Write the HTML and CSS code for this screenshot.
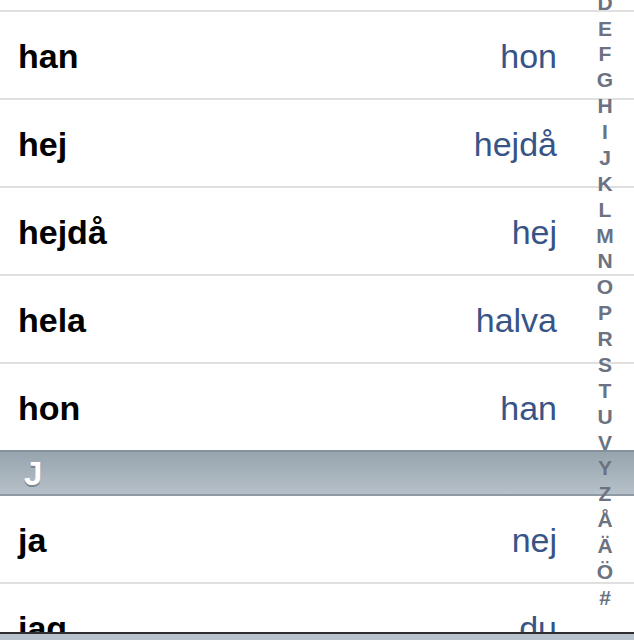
FILE: index.html
```html
<!DOCTYPE html>
<html lang="sv">
<head>
<meta charset="utf-8">
<title>Ordlista</title>
<link rel="stylesheet" href="styles.css">
</head>
<body>
<div class="table">
  <div class="row first"><span class="word">han</span><span class="opp">hon</span></div>
  <div class="row"><span class="word">hej</span><span class="opp">hejdå</span></div>
  <div class="row"><span class="word">hejdå</span><span class="opp">hej</span></div>
  <div class="row"><span class="word">hela</span><span class="opp">halva</span></div>
  <div class="row"><span class="word">hon</span><span class="opp">han</span></div>
  <div class="section-header">J</div>
  <div class="row no-top"><span class="word">ja</span><span class="opp">nej</span></div>
  <div class="row"><span class="word">jag</span><span class="opp">du</span></div>
</div>
<ul class="index">
  <li>A</li><li>B</li><li>C</li><li>D</li><li>E</li><li>F</li><li>G</li><li>H</li><li>I</li><li>J</li><li>K</li><li>L</li><li>M</li><li>N</li><li>O</li><li>P</li><li>R</li><li>S</li><li>T</li><li>U</li><li>V</li><li>Y</li><li>Z</li><li>Å</li><li>Ä</li><li>Ö</li><li>#</li>
</ul>
<div class="bottom-bar"></div>
</body>
</html>
```
FILE: styles.css
```css
html, body {
  margin: 0;
  padding: 0;
  background: #ffffff;
  overflow: hidden;
  font-family: "Liberation Sans", Arial, sans-serif;
}

.table {
  padding-top: 10px;
}

.row {
  border-top: 2px solid #e0e0e0;
  display: flex;
  align-items: center;
  justify-content: space-between;
  padding: 2px 77px 0 18px;
  box-sizing: content-box;
  height: 84px;
  font-size: 34px;
}

.row.no-top {
  border-top: none;
}

.word {
  font-weight: bold;
  color: #000000;
}

.opp {
  color: #385487;
}

.section-header {
  height: 42px;
  border-top: 2px solid #85929d;
  border-bottom: 2px solid #8e99a3;
  background: linear-gradient(#97a4ae, #b6c0c8);
  color: #ffffff;
  font-weight: bold;
  font-size: 33px;
  line-height: 44px;
  padding-left: 24px;
  text-shadow: 0 2px 0 rgba(60, 70, 80, 0.45);
}

.index {
  position: absolute;
  top: -88px;
  right: 14px;
  width: 30px;
  margin: 0;
  padding: 0;
  list-style: none;
  text-align: center;
  font-weight: bold;
  font-size: 21px;
  line-height: 25.88px;
  color: #6b7281;
}

.bottom-bar {
  position: fixed;
  left: 0;
  right: 0;
  bottom: 0;
  height: 6px;
  border-top: 2px solid #2e2e2e;
  background: #b8c3cf;
}
```
